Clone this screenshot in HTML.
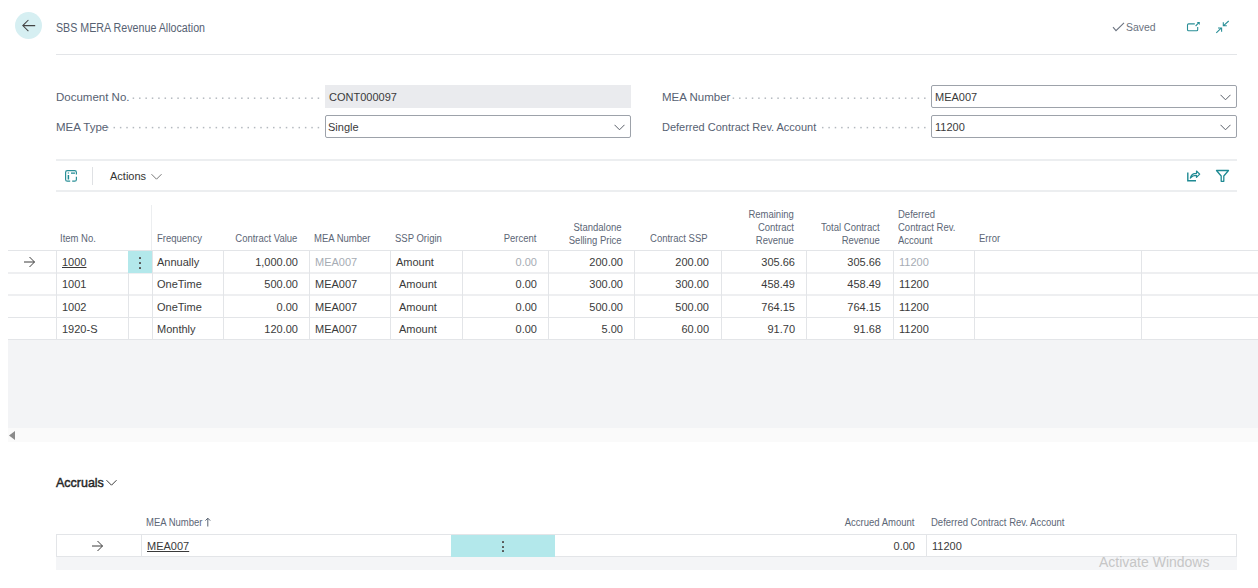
<!DOCTYPE html>
<html><head><meta charset="utf-8">
<style>
html,body{margin:0;padding:0;background:#fff;}
body{width:1258px;height:588px;position:relative;overflow:hidden;font-family:"Liberation Sans",sans-serif;}
.a{position:absolute;}
.t{position:absolute;font-size:11px;line-height:14px;white-space:nowrap;color:#3a3a3a;}
.lb{color:#566172;}
.hd{position:absolute;font-size:10px;line-height:12.75px;white-space:pre;color:#5c6676;transform:scaleX(0.95);transform-origin:0 0;}
.hd.r{transform-origin:100% 0;}
.r{text-align:right;}
.hl{position:absolute;height:1px;background:#e3e5e8;}
.vl{position:absolute;width:1px;background:#e3e5e8;}
.dots{position:absolute;height:2px;background-image:radial-gradient(circle,#b9bdc3 0.7px,transparent 0.9px);background-size:6.4px 2px;background-repeat:repeat-x;}
.box{position:absolute;box-sizing:border-box;border:1px solid #9da2aa;border-radius:2px;height:23px;}
.u{text-decoration:underline;text-underline-offset:1px;}
.dim{color:#a6acb4;}
</style></head><body>

<!-- header -->
<div class="a" style="left:15px;top:12px;width:27px;height:27px;border-radius:50%;background:#d6eff2;"></div>
<svg class="a" style="left:21px;top:18px" width="16" height="15" viewBox="0 0 16 15"><path d="M14.2 7.6H1.8M7.4 2 1.8 7.6l5.6 5.6" fill="none" stroke="#444" stroke-width="1.05"/></svg>
<div class="t lb" style="left:56px;top:21px;font-size:12px;transform:scaleX(0.89);transform-origin:0 0;">SBS MERA Revenue Allocation</div>
<div class="hl" style="left:56px;top:54px;width:1181px;"></div>

<svg class="a" style="left:1112px;top:22px" width="13" height="10" viewBox="0 0 13 10"><path d="M1 5.2 4 8.6 12 0.8" fill="none" stroke="#6b7380" stroke-width="1.1"/></svg>
<div class="t" style="left:1126px;top:20px;color:#6b7380;transform:scaleX(0.95);transform-origin:0 0;">Saved</div>
<svg class="a" style="left:1186px;top:21px" width="15" height="12" viewBox="0 0 15 12"><path d="M8.8 2.9H2.6Q1.5 2.9 1.5 4V8.8Q1.5 9.8 2.6 9.8H10.7Q11.7 9.8 11.7 8.8V6" fill="none" stroke="#2a8f97" stroke-width="1.1"/><path d="M9.6 5 12.4 2.2" fill="none" stroke="#2a8f97" stroke-width="1.1"/><path d="M10.8 1.1 13.8 0.9 13.6 3.9z" fill="#1f8a93"/></svg>
<svg class="a" style="left:1215px;top:20px" width="15" height="14" viewBox="0 0 15 14"><path d="M1.3 12.9 5.9 8.3M3 8H6.6V11.7M13.7 1 8.9 5.4M8.3 2.2V5.7H11.8" fill="none" stroke="#2a8f97" stroke-width="1.1"/></svg>

<!-- form -->
<svg class="a" style="left:0;top:0" width="1258" height="150" fill="#b4b9bf"><rect x="132.65" y="97.45" width="1.5" height="1.5"/><rect x="139.03" y="97.45" width="1.5" height="1.5"/><rect x="145.41" y="97.45" width="1.5" height="1.5"/><rect x="151.79" y="97.45" width="1.5" height="1.5"/><rect x="158.17" y="97.45" width="1.5" height="1.5"/><rect x="164.55" y="97.45" width="1.5" height="1.5"/><rect x="170.93" y="97.45" width="1.5" height="1.5"/><rect x="177.31" y="97.45" width="1.5" height="1.5"/><rect x="183.69" y="97.45" width="1.5" height="1.5"/><rect x="190.07" y="97.45" width="1.5" height="1.5"/><rect x="196.45" y="97.45" width="1.5" height="1.5"/><rect x="202.83" y="97.45" width="1.5" height="1.5"/><rect x="209.21" y="97.45" width="1.5" height="1.5"/><rect x="215.59" y="97.45" width="1.5" height="1.5"/><rect x="221.97" y="97.45" width="1.5" height="1.5"/><rect x="228.35" y="97.45" width="1.5" height="1.5"/><rect x="234.73" y="97.45" width="1.5" height="1.5"/><rect x="241.11" y="97.45" width="1.5" height="1.5"/><rect x="247.49" y="97.45" width="1.5" height="1.5"/><rect x="253.87" y="97.45" width="1.5" height="1.5"/><rect x="260.25" y="97.45" width="1.5" height="1.5"/><rect x="266.63" y="97.45" width="1.5" height="1.5"/><rect x="273.01" y="97.45" width="1.5" height="1.5"/><rect x="279.39" y="97.45" width="1.5" height="1.5"/><rect x="285.77" y="97.45" width="1.5" height="1.5"/><rect x="292.15" y="97.45" width="1.5" height="1.5"/><rect x="298.53" y="97.45" width="1.5" height="1.5"/><rect x="304.91" y="97.45" width="1.5" height="1.5"/><rect x="311.29" y="97.45" width="1.5" height="1.5"/><rect x="317.67" y="97.45" width="1.5" height="1.5"/><rect x="107.13" y="126.85" width="1.5" height="1.5"/><rect x="113.51" y="126.85" width="1.5" height="1.5"/><rect x="119.89" y="126.85" width="1.5" height="1.5"/><rect x="126.27" y="126.85" width="1.5" height="1.5"/><rect x="132.65" y="126.85" width="1.5" height="1.5"/><rect x="139.03" y="126.85" width="1.5" height="1.5"/><rect x="145.41" y="126.85" width="1.5" height="1.5"/><rect x="151.79" y="126.85" width="1.5" height="1.5"/><rect x="158.17" y="126.85" width="1.5" height="1.5"/><rect x="164.55" y="126.85" width="1.5" height="1.5"/><rect x="170.93" y="126.85" width="1.5" height="1.5"/><rect x="177.31" y="126.85" width="1.5" height="1.5"/><rect x="183.69" y="126.85" width="1.5" height="1.5"/><rect x="190.07" y="126.85" width="1.5" height="1.5"/><rect x="196.45" y="126.85" width="1.5" height="1.5"/><rect x="202.83" y="126.85" width="1.5" height="1.5"/><rect x="209.21" y="126.85" width="1.5" height="1.5"/><rect x="215.59" y="126.85" width="1.5" height="1.5"/><rect x="221.97" y="126.85" width="1.5" height="1.5"/><rect x="228.35" y="126.85" width="1.5" height="1.5"/><rect x="234.73" y="126.85" width="1.5" height="1.5"/><rect x="241.11" y="126.85" width="1.5" height="1.5"/><rect x="247.49" y="126.85" width="1.5" height="1.5"/><rect x="253.87" y="126.85" width="1.5" height="1.5"/><rect x="260.25" y="126.85" width="1.5" height="1.5"/><rect x="266.63" y="126.85" width="1.5" height="1.5"/><rect x="273.01" y="126.85" width="1.5" height="1.5"/><rect x="279.39" y="126.85" width="1.5" height="1.5"/><rect x="285.77" y="126.85" width="1.5" height="1.5"/><rect x="292.15" y="126.85" width="1.5" height="1.5"/><rect x="298.53" y="126.85" width="1.5" height="1.5"/><rect x="304.91" y="126.85" width="1.5" height="1.5"/><rect x="311.29" y="126.85" width="1.5" height="1.5"/><rect x="317.67" y="126.85" width="1.5" height="1.5"/><rect x="732.65" y="97.45" width="1.5" height="1.5"/><rect x="739.03" y="97.45" width="1.5" height="1.5"/><rect x="745.41" y="97.45" width="1.5" height="1.5"/><rect x="751.79" y="97.45" width="1.5" height="1.5"/><rect x="758.17" y="97.45" width="1.5" height="1.5"/><rect x="764.55" y="97.45" width="1.5" height="1.5"/><rect x="770.93" y="97.45" width="1.5" height="1.5"/><rect x="777.31" y="97.45" width="1.5" height="1.5"/><rect x="783.69" y="97.45" width="1.5" height="1.5"/><rect x="790.07" y="97.45" width="1.5" height="1.5"/><rect x="796.45" y="97.45" width="1.5" height="1.5"/><rect x="802.83" y="97.45" width="1.5" height="1.5"/><rect x="809.21" y="97.45" width="1.5" height="1.5"/><rect x="815.59" y="97.45" width="1.5" height="1.5"/><rect x="821.97" y="97.45" width="1.5" height="1.5"/><rect x="828.35" y="97.45" width="1.5" height="1.5"/><rect x="834.73" y="97.45" width="1.5" height="1.5"/><rect x="841.11" y="97.45" width="1.5" height="1.5"/><rect x="847.49" y="97.45" width="1.5" height="1.5"/><rect x="853.87" y="97.45" width="1.5" height="1.5"/><rect x="860.25" y="97.45" width="1.5" height="1.5"/><rect x="866.63" y="97.45" width="1.5" height="1.5"/><rect x="873.01" y="97.45" width="1.5" height="1.5"/><rect x="879.39" y="97.45" width="1.5" height="1.5"/><rect x="885.77" y="97.45" width="1.5" height="1.5"/><rect x="892.15" y="97.45" width="1.5" height="1.5"/><rect x="898.53" y="97.45" width="1.5" height="1.5"/><rect x="904.91" y="97.45" width="1.5" height="1.5"/><rect x="911.29" y="97.45" width="1.5" height="1.5"/><rect x="917.67" y="97.45" width="1.5" height="1.5"/><rect x="924.05" y="97.45" width="1.5" height="1.5"/><rect x="821.97" y="126.85" width="1.5" height="1.5"/><rect x="828.35" y="126.85" width="1.5" height="1.5"/><rect x="834.73" y="126.85" width="1.5" height="1.5"/><rect x="841.11" y="126.85" width="1.5" height="1.5"/><rect x="847.49" y="126.85" width="1.5" height="1.5"/><rect x="853.87" y="126.85" width="1.5" height="1.5"/><rect x="860.25" y="126.85" width="1.5" height="1.5"/><rect x="866.63" y="126.85" width="1.5" height="1.5"/><rect x="873.01" y="126.85" width="1.5" height="1.5"/><rect x="879.39" y="126.85" width="1.5" height="1.5"/><rect x="885.77" y="126.85" width="1.5" height="1.5"/><rect x="892.15" y="126.85" width="1.5" height="1.5"/><rect x="898.53" y="126.85" width="1.5" height="1.5"/><rect x="904.91" y="126.85" width="1.5" height="1.5"/><rect x="911.29" y="126.85" width="1.5" height="1.5"/><rect x="917.67" y="126.85" width="1.5" height="1.5"/><rect x="924.05" y="126.85" width="1.5" height="1.5"/></svg>
<div class="t lb" style="left:56px;top:90px;font-size:11.5px;">Document No.</div>
<div class="a" style="left:325px;top:85px;width:306px;height:23px;background:#eaebee;"></div>
<div class="t" style="left:329px;top:90px;">CONT000097</div>

<div class="t lb" style="left:56px;top:120px;font-size:11.5px;">MEA Type</div>
<div class="box" style="left:325px;top:115px;width:306px;"></div>
<div class="t" style="left:328px;top:120px;">Single</div>
<svg class="a" style="left:614px;top:124px" width="11" height="7" viewBox="0 0 11 7"><path d="M0.5 0.8 5.5 5.8 10.5 0.8" fill="none" stroke="#5a6069" stroke-width="1"/></svg>

<div class="t lb" style="left:662px;top:90px;font-size:11.5px;">MEA Number</div>
<div class="box" style="left:931px;top:85px;width:306px;"></div>
<div class="t" style="left:935px;top:90px;">MEA007</div>
<svg class="a" style="left:1220px;top:94px" width="11" height="7" viewBox="0 0 11 7"><path d="M0.5 0.8 5.5 5.8 10.5 0.8" fill="none" stroke="#5a6069" stroke-width="1"/></svg>

<div class="t lb" style="left:662px;top:120px;font-size:11.5px;transform:scaleX(0.955);transform-origin:0 0;">Deferred Contract Rev. Account</div>
<div class="box" style="left:931px;top:115px;width:306px;"></div>
<div class="t" style="left:935px;top:120px;">11200</div>
<svg class="a" style="left:1220px;top:124px" width="11" height="7" viewBox="0 0 11 7"><path d="M0.5 0.8 5.5 5.8 10.5 0.8" fill="none" stroke="#5a6069" stroke-width="1"/></svg>

<!-- action bar -->
<div class="hl" style="left:56px;top:159px;width:1181px;height:2px;background:#eceef0;"></div>
<div class="hl" style="left:56px;top:190px;width:1181px;height:2px;background:#eceef0;"></div>
<svg class="a" style="left:65px;top:170px" width="13" height="12" viewBox="0 0 13 12"><path d="M5.2 11.2H2.4Q0.6 11.2 0.6 9.4V2.4Q0.6 0.6 2.4 0.6H9.6Q11.4 0.6 11.4 2.4V4.6M7.2 11.2H9.6Q11.4 11.2 11.4 9.4V6.8" fill="none" stroke="#2a8f97" stroke-width="1.2"/><path d="M3.4 2.5V3.6M6 3.1H10" fill="none" stroke="#1f8a93" stroke-width="1.4"/><path d="M3.4 5V9.5" fill="none" stroke="#1f8a93" stroke-width="1.5"/></svg>
<div class="vl" style="left:92px;top:167px;height:18px;background:#dfe1e4;"></div>
<div class="t" style="left:110px;top:169px;color:#333;">Actions</div>
<svg class="a" style="left:151px;top:173px" width="11" height="8" viewBox="0 0 11 8"><path d="M0.5 1.2 5.5 6.2 10.5 1.2" fill="none" stroke="#777" stroke-width="1"/></svg>
<svg class="a" style="left:1186px;top:169px" width="15" height="13" viewBox="0 0 15 13"><path d="M1.8 3.5v8.3h8.2" fill="none" stroke="#1f8a93" stroke-width="1.4"/><path d="M4.3 9C5 5.5 7.5 4.3 10.5 4.3V2l3.2 3.2-3.2 3.2V6.4C8 6.4 6 7 4.3 9z" fill="none" stroke="#1f8a93" stroke-width="1.2" stroke-linejoin="round"/></svg>
<svg class="a" style="left:1215px;top:169px" width="15" height="14" viewBox="0 0 15 14"><path d="M1.5 1.5h12L8.8 7v5.3H6.2V7z" fill="none" stroke="#1f8a93" stroke-width="1.3" stroke-linejoin="round"/></svg>

<!-- table header -->
<div class="vl" style="left:151px;top:205px;height:45px;background:#eceef0;"></div>
<div class="hd" style="left:60px;top:233px;">Item No.</div>
<div class="hd" style="left:157px;top:233px;">Frequency</div>
<div class="hd r" style="right:961px;top:233px;">Contract Value</div>
<div class="hd" style="left:314px;top:233px;">MEA Number</div>
<div class="hd" style="left:395px;top:233px;">SSP Origin</div>
<div class="hd r" style="right:722px;top:233px;">Percent</div>
<div class="hd r" style="right:636px;top:222px;">Standalone
Selling Price</div>
<div class="hd r" style="right:550px;top:233px;">Contract SSP</div>
<div class="hd r" style="right:464px;top:209px;">Remaining
Contract
Revenue</div>
<div class="hd r" style="right:378px;top:222px;">Total Contract
Revenue</div>
<div class="hd" style="left:898px;top:209px;">Deferred
Contract Rev.
Account</div>
<div class="hd" style="left:979px;top:233px;">Error</div>

<!-- table grid -->
<div class="hl" style="left:8px;top:250px;width:1250px;"></div>
<div class="hl" style="left:8px;top:272px;width:1250px;height:2px;background:#eeeff1;"></div>
<div class="hl" style="left:8px;top:294px;width:1250px;height:2px;background:#eeeff1;"></div>
<div class="hl" style="left:8px;top:317px;width:1250px;"></div>
<div class="hl" style="left:8px;top:339px;width:1250px;"></div>
<div class="vl" style="left:56px;top:250px;height:89px;"></div>
<div class="vl" style="left:128px;top:250px;height:89px;"></div>
<div class="vl" style="left:152px;top:250px;height:89px;"></div>
<div class="vl" style="left:223px;top:250px;height:89px;"></div>
<div class="vl" style="left:309px;top:250px;height:89px;"></div>
<div class="vl" style="left:390px;top:250px;height:89px;"></div>
<div class="vl" style="left:462px;top:250px;height:89px;"></div>
<div class="vl" style="left:548px;top:250px;height:89px;"></div>
<div class="vl" style="left:634px;top:250px;height:89px;"></div>
<div class="vl" style="left:721px;top:250px;height:89px;"></div>
<div class="vl" style="left:806px;top:250px;height:89px;"></div>
<div class="vl" style="left:893px;top:250px;height:89px;"></div>
<div class="vl" style="left:974px;top:250px;height:89px;"></div>
<div class="vl" style="left:1141px;top:250px;height:89px;"></div>

<!-- row 1 -->
<svg class="a" style="left:23px;top:256px" width="13" height="12" viewBox="0 0 13 12"><path d="M11.5 6H1M6.5 1l5 5-5 5" fill="none" stroke="#3c3c3c" stroke-width="1"/></svg>
<div class="a" style="left:128px;top:251px;width:24px;height:22px;background:#b3e8eb;"></div>
<div class="a" style="left:139px;top:257px;width:2px;height:2px;background:#555;border-radius:0.5px;"></div>
<div class="a" style="left:139px;top:262px;width:2px;height:2px;background:#555;border-radius:0.5px;"></div>
<div class="a" style="left:139px;top:267px;width:2px;height:2px;background:#555;border-radius:0.5px;"></div>
<div class="t u" style="left:62px;top:255px;">1000</div>
<div class="t" style="left:157px;top:255px;">Annually</div>
<div class="t r" style="right:960px;top:255px;">1,000.00</div>
<div class="t dim" style="left:315px;top:255px;">MEA007</div>
<div class="t" style="left:396px;top:255px;">Amount</div>
<div class="t r dim" style="right:721px;top:255px;">0.00</div>
<div class="t r" style="right:635px;top:255px;">200.00</div>
<div class="t r" style="right:549px;top:255px;">200.00</div>
<div class="t r" style="right:463px;top:255px;">305.66</div>
<div class="t r" style="right:377px;top:255px;">305.66</div>
<div class="t dim" style="left:899px;top:255px;">11200</div>

<!-- row 2 -->
<div class="t" style="left:62px;top:277px;">1001</div>
<div class="t" style="left:157px;top:277px;">OneTime</div>
<div class="t r" style="right:960px;top:277px;">500.00</div>
<div class="t" style="left:315px;top:277px;">MEA007</div>
<div class="t" style="left:399px;top:277px;">Amount</div>
<div class="t r" style="right:721px;top:277px;">0.00</div>
<div class="t r" style="right:635px;top:277px;">300.00</div>
<div class="t r" style="right:549px;top:277px;">300.00</div>
<div class="t r" style="right:463px;top:277px;">458.49</div>
<div class="t r" style="right:377px;top:277px;">458.49</div>
<div class="t" style="left:899px;top:277px;">11200</div>

<!-- row 3 -->
<div class="t" style="left:62px;top:300px;">1002</div>
<div class="t" style="left:157px;top:300px;">OneTime</div>
<div class="t r" style="right:960px;top:300px;">0.00</div>
<div class="t" style="left:315px;top:300px;">MEA007</div>
<div class="t" style="left:399px;top:300px;">Amount</div>
<div class="t r" style="right:721px;top:300px;">0.00</div>
<div class="t r" style="right:635px;top:300px;">500.00</div>
<div class="t r" style="right:549px;top:300px;">500.00</div>
<div class="t r" style="right:463px;top:300px;">764.15</div>
<div class="t r" style="right:377px;top:300px;">764.15</div>
<div class="t" style="left:899px;top:300px;">11200</div>

<!-- row 4 -->
<div class="t" style="left:62px;top:322px;">1920-S</div>
<div class="t" style="left:157px;top:322px;">Monthly</div>
<div class="t r" style="right:960px;top:322px;">120.00</div>
<div class="t" style="left:315px;top:322px;">MEA007</div>
<div class="t" style="left:399px;top:322px;">Amount</div>
<div class="t r" style="right:721px;top:322px;">0.00</div>
<div class="t r" style="right:635px;top:322px;">5.00</div>
<div class="t r" style="right:549px;top:322px;">60.00</div>
<div class="t r" style="right:463px;top:322px;">91.70</div>
<div class="t r" style="right:377px;top:322px;">91.68</div>
<div class="t" style="left:899px;top:322px;">11200</div>

<!-- grey area -->
<div class="a" style="left:8px;top:340px;width:1250px;height:88px;background:#f3f4f6;"></div>
<div class="a" style="left:8px;top:428px;width:1250px;height:14px;background:#fafafa;"></div>
<svg class="a" style="left:8px;top:430px" width="8" height="11" viewBox="0 0 8 11"><path d="M7 1v9L1 5.5z" fill="#8a8a8a"/></svg>

<!-- accruals -->
<div class="t" style="left:56px;top:475px;font-size:13px;line-height:16px;color:#262626;-webkit-text-stroke:0.45px #262626;transform:scaleX(0.96);transform-origin:0 0;">Accruals</div>
<svg class="a" style="left:106px;top:479px" width="11" height="8" viewBox="0 0 11 8"><path d="M0.5 1.2 5.5 6.2 10.5 1.2" fill="none" stroke="#3c3c3c" stroke-width="1"/></svg>

<div class="hd" style="left:146px;top:517px;">MEA Number</div>
<svg class="a" style="left:204px;top:517px" width="8" height="10" viewBox="0 0 8 10"><path d="M3.8 1.2V9.5M1.4 3.6 3.8 1.2 6.2 3.6" fill="none" stroke="#5a6472" stroke-width="1"/></svg>
<div class="hd r" style="right:344px;top:517px;">Accrued Amount</div>
<div class="hd" style="left:931px;top:517px;">Deferred Contract Rev. Account</div>

<div class="a" style="left:56px;top:534px;width:1181px;height:23px;box-sizing:border-box;border:1px solid #e3e5e8;"></div>
<div class="vl" style="left:141px;top:535px;height:22px;"></div>
<div class="vl" style="left:926px;top:535px;height:22px;"></div>
<svg class="a" style="left:91px;top:540px" width="13" height="12" viewBox="0 0 13 12"><path d="M11.5 6H1M6.5 1l5 5-5 5" fill="none" stroke="#3c3c3c" stroke-width="1"/></svg>
<div class="t u" style="left:147px;top:539px;">MEA007</div>
<div class="a" style="left:451px;top:535px;width:104px;height:22px;background:#b3e8eb;"></div>
<div class="a" style="left:502px;top:541px;width:2px;height:2px;background:#555;border-radius:0.5px;"></div>
<div class="a" style="left:502px;top:546px;width:2px;height:2px;background:#555;border-radius:0.5px;"></div>
<div class="a" style="left:502px;top:550px;width:2px;height:2px;background:#555;border-radius:0.5px;"></div>
<div class="t r" style="right:343px;top:539px;">0.00</div>
<div class="t" style="left:932px;top:539px;">11200</div>
<div class="a" style="left:56px;top:557px;width:1181px;height:13px;background:#f4f5f7;"></div>

<div class="t" style="left:1099px;top:554px;font-size:14px;line-height:17px;color:#c6c6c6;">Activate Windows</div>

</body></html>
